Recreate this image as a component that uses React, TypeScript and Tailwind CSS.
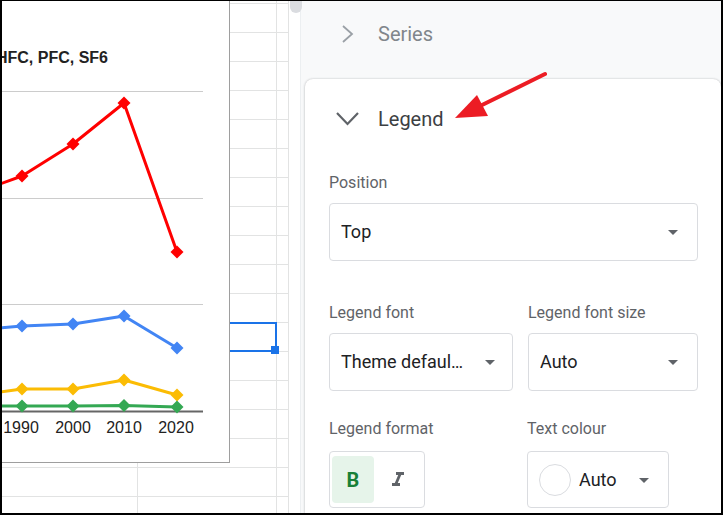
import React from 'react';

type Pt = [number, number];

const SERIES: { color: string; pts: Pt[] }[] = [
  { color: '#ff0000', pts: [[0, 184], [22, 176], [73, 144], [124, 103], [177, 252]] },
  { color: '#4285f4', pts: [[0, 328], [22, 326], [73, 324], [124, 316], [177, 348]] },
  { color: '#fbbc04', pts: [[0, 392], [22, 389], [73, 389], [124, 380], [177, 395]] },
  { color: '#34a853', pts: [[0, 406], [22, 406], [73, 406], [124, 405.5], [177, 407]] },
];

const YEARS = [
  { label: '1990', x: 21 },
  { label: '2000', x: 73 },
  { label: '2010', x: 124 },
  { label: '2020', x: 176 },
];

const diamond = (x: number, y: number, r = 6.5) =>
  `${x},${y - r} ${x + r},${y} ${x},${y + r} ${x - r},${y}`;

// chart floats on the sheet, drawn in page coordinates via viewBox
function Chart() {
  return (
    <div className="absolute left-0 top-0 z-10 w-[228px] h-[462px] bg-white border-r border-b border-[#9e9e9e]">
      <svg width="227" height="461" viewBox="2 1 227 461" className="block">
        <text
          x="108"
          y="63"
          textAnchor="end"
          fontFamily="'Liberation Sans', Arial, sans-serif"
          fontSize="16"
          fontWeight="bold"
          fill="#222222"
        >
          HFC, PFC, SF6
        </text>
        {[91, 198, 304].map((y) => (
          <line key={y} x1="0" x2="203" y1={y + 0.5} y2={y + 0.5} stroke="#cccccc" strokeWidth="1" />
        ))}
        <line x1="0" x2="203" y1="411.5" y2="411.5" stroke="#666666" strokeWidth="2" />
        {SERIES.map((s) => (
          <g key={s.color}>
            <polyline
              points={s.pts.map((p) => p.join(',')).join(' ')}
              fill="none"
              stroke={s.color}
              strokeWidth="3"
              strokeLinejoin="round"
            />
            {s.pts.slice(1).map(([x, y]) => (
              <polygon key={x} points={diamond(x, y)} fill={s.color} />
            ))}
          </g>
        ))}
        {YEARS.map((t) => (
          <text
            key={t.label}
            x={t.x}
            y="433"
            textAnchor="middle"
            fontFamily="'Liberation Sans', Arial, sans-serif"
            fontSize="16"
            fill="#222222"
          >
            {t.label}
          </text>
        ))}
      </svg>
    </div>
  );
}

function Sheet() {
  const rows = Array.from({ length: 18 });
  return (
    <div className="relative w-[287px] h-full shrink-0 overflow-hidden bg-white">
      <div className="flex h-[3px] border-b border-[#e2e3e3]">
        <div className="w-[136px] border-r border-[#e2e3e3]" />
        <div className="w-[139px] border-r border-[#e2e3e3]" />
        <div className="w-[12px] border-r border-[#e2e3e3]" />
      </div>
      {rows.map((_, i) => (
        <div key={i} className="flex h-[29px] border-b border-[#e2e3e3]">
          <div className="w-[136px] border-r border-[#e2e3e3]" />
          <div className="w-[139px] border-r border-[#e2e3e3]" />
          <div className="w-[12px] border-r border-[#e2e3e3]" />
        </div>
      ))}

      {/* selected cell, mostly hidden under the chart */}
      <div className="absolute left-[135px] top-[321px] w-[140px] h-[30px] border-2 border-[#1a73e8]" />
      <div className="absolute left-[269px] top-[345px] w-[8px] h-[8px] bg-[#1a73e8]" />

      <Chart />
    </div>
  );
}

function DropArrow() {
  return (
    <svg width="24" height="24" viewBox="0 0 24 24" className="shrink-0">
      <path d="M7 10l5 5 5-5z" fill="#5f6368" />
    </svg>
  );
}

function Select({ value, className, arrowPad }: { value: string; className: string; arrowPad: string }) {
  return (
    <div className={`${className} h-[58px] rounded-[4px] border border-[#dadce0] flex items-center pl-[11px] ${arrowPad}`}>
      <span className="flex-1 text-[18px] leading-[24px] text-[#202124] whitespace-nowrap overflow-hidden">{value}</span>
      <DropArrow />
    </div>
  );
}

function Label({ children }: { children: React.ReactNode }) {
  return <div className="text-[16px] leading-[20px] text-[#5f6368] whitespace-nowrap">{children}</div>;
}

function Panel() {
  return (
    <div className="flex-1 min-w-0 flex flex-col bg-[#f8f9fa] border-l border-[#eceff1]">
      <div className="h-[78px] shrink-0 flex items-start pt-[21px] pl-[37px]">
        <svg width="24" height="24" viewBox="0 0 24 24">
          <polyline points="5,4 14,12 5,20" fill="none" stroke="#9aa0a6" strokeWidth="1.8" />
        </svg>
        <span className="ml-[16px] text-[20px] leading-[24px] text-[#80868b]">Series</span>
      </div>

      <div className="flex-1 ml-[4px] bg-white rounded-t-[8px] shadow-[0_0_2px_rgba(60,64,67,0.3),0_1px_3px_rgba(60,64,67,0.15)] pl-[24px] pr-[23px]">
        <div className="h-[80px] flex items-center ml-[6px]">
          <svg width="26" height="24" viewBox="0 0 26 24">
            <polyline points="2,6 12.5,17 23,6" fill="none" stroke="#5f6368" strokeWidth="2.2" />
          </svg>
          <span className="ml-[17px] text-[20px] leading-[24px] text-[#3c4043]">Legend</span>
        </div>

        <div className="mt-[14px]">
          <Label>Position</Label>
        </div>
        <Select value="Top" className="mt-[10px] w-full" arrowPad="pr-[12px]" />

        <div className="mt-[42px] flex gap-[15px]">
          <div className="w-[184px]">
            <Label>Legend font</Label>
          </div>
          <div className="flex-1">
            <Label>Legend font size</Label>
          </div>
        </div>
        <div className="mt-[10px] flex gap-[15px]">
          <Select value="Theme defaul…" className="w-[184px]" arrowPad="pr-[10px]" />
          <Select value="Auto" className="flex-1" arrowPad="pr-[12px]" />
        </div>

        <div className="mt-[28px] flex">
          <div className="w-[198px]">
            <Label>Legend format</Label>
          </div>
          <div className="flex-1">
            <Label>Text colour</Label>
          </div>
        </div>
        <div className="mt-[12px] flex">
          <div className="w-[198px]">
            <div className="w-[96px] h-[57px] rounded-[4px] border border-[#dadce0] flex items-center px-[2px]">
              <div className="w-[42px] h-[47px] rounded-[4px] bg-[#e6f4ea] flex items-center justify-center">
                <span className="text-[20px] leading-none font-bold text-[#188038] font-['Roboto',sans-serif]">B</span>
              </div>
              <div className="w-[48px] h-[47px] flex items-center justify-center">
                <svg width="24" height="24" viewBox="0 0 24 24">
                  <path d="M10 4v3h2.21l-3.42 8H6v3h8v-3h-2.21l3.42-8H18V4z" fill="#5f6368" />
                </svg>
              </div>
            </div>
          </div>
          <div className="w-[142px] h-[57px] rounded-[4px] border border-[#dadce0] flex items-center pl-[11px] pr-[12px]">
            <div className="w-[32px] h-[32px] rounded-full border border-[#dadce0] bg-white shrink-0" />
            <span className="ml-[8px] flex-1 text-[18px] leading-[24px] text-[#202124]">Auto</span>
            <DropArrow />
          </div>
        </div>
      </div>
    </div>
  );
}

export default function App() {
  return (
    <div className="relative w-[723px] h-[515px] flex overflow-hidden bg-white border-black border-t border-x-2 border-b-2 font-['Roboto','Noto_Sans',sans-serif]">
      <Sheet />
      <div className="relative w-[11px] shrink-0 bg-white">
        <div className="absolute left-[1px] top-0 z-20 w-[12px] h-[12px] rounded-b-[6px] bg-[#dadce0]" />
      </div>
      <Panel />

      {/* red annotation arrow */}
      <svg
        width="723"
        height="515"
        viewBox="2 1 723 515"
        className="absolute left-0 top-0 z-30 pointer-events-none"
      >
        <line x1="545" y1="74" x2="478" y2="107" stroke="#ec1c24" strokeWidth="4" strokeLinecap="round" />
        <polygon points="455,118 477,95 488,116" fill="#ec1c24" />
      </svg>
    </div>
  );
}
